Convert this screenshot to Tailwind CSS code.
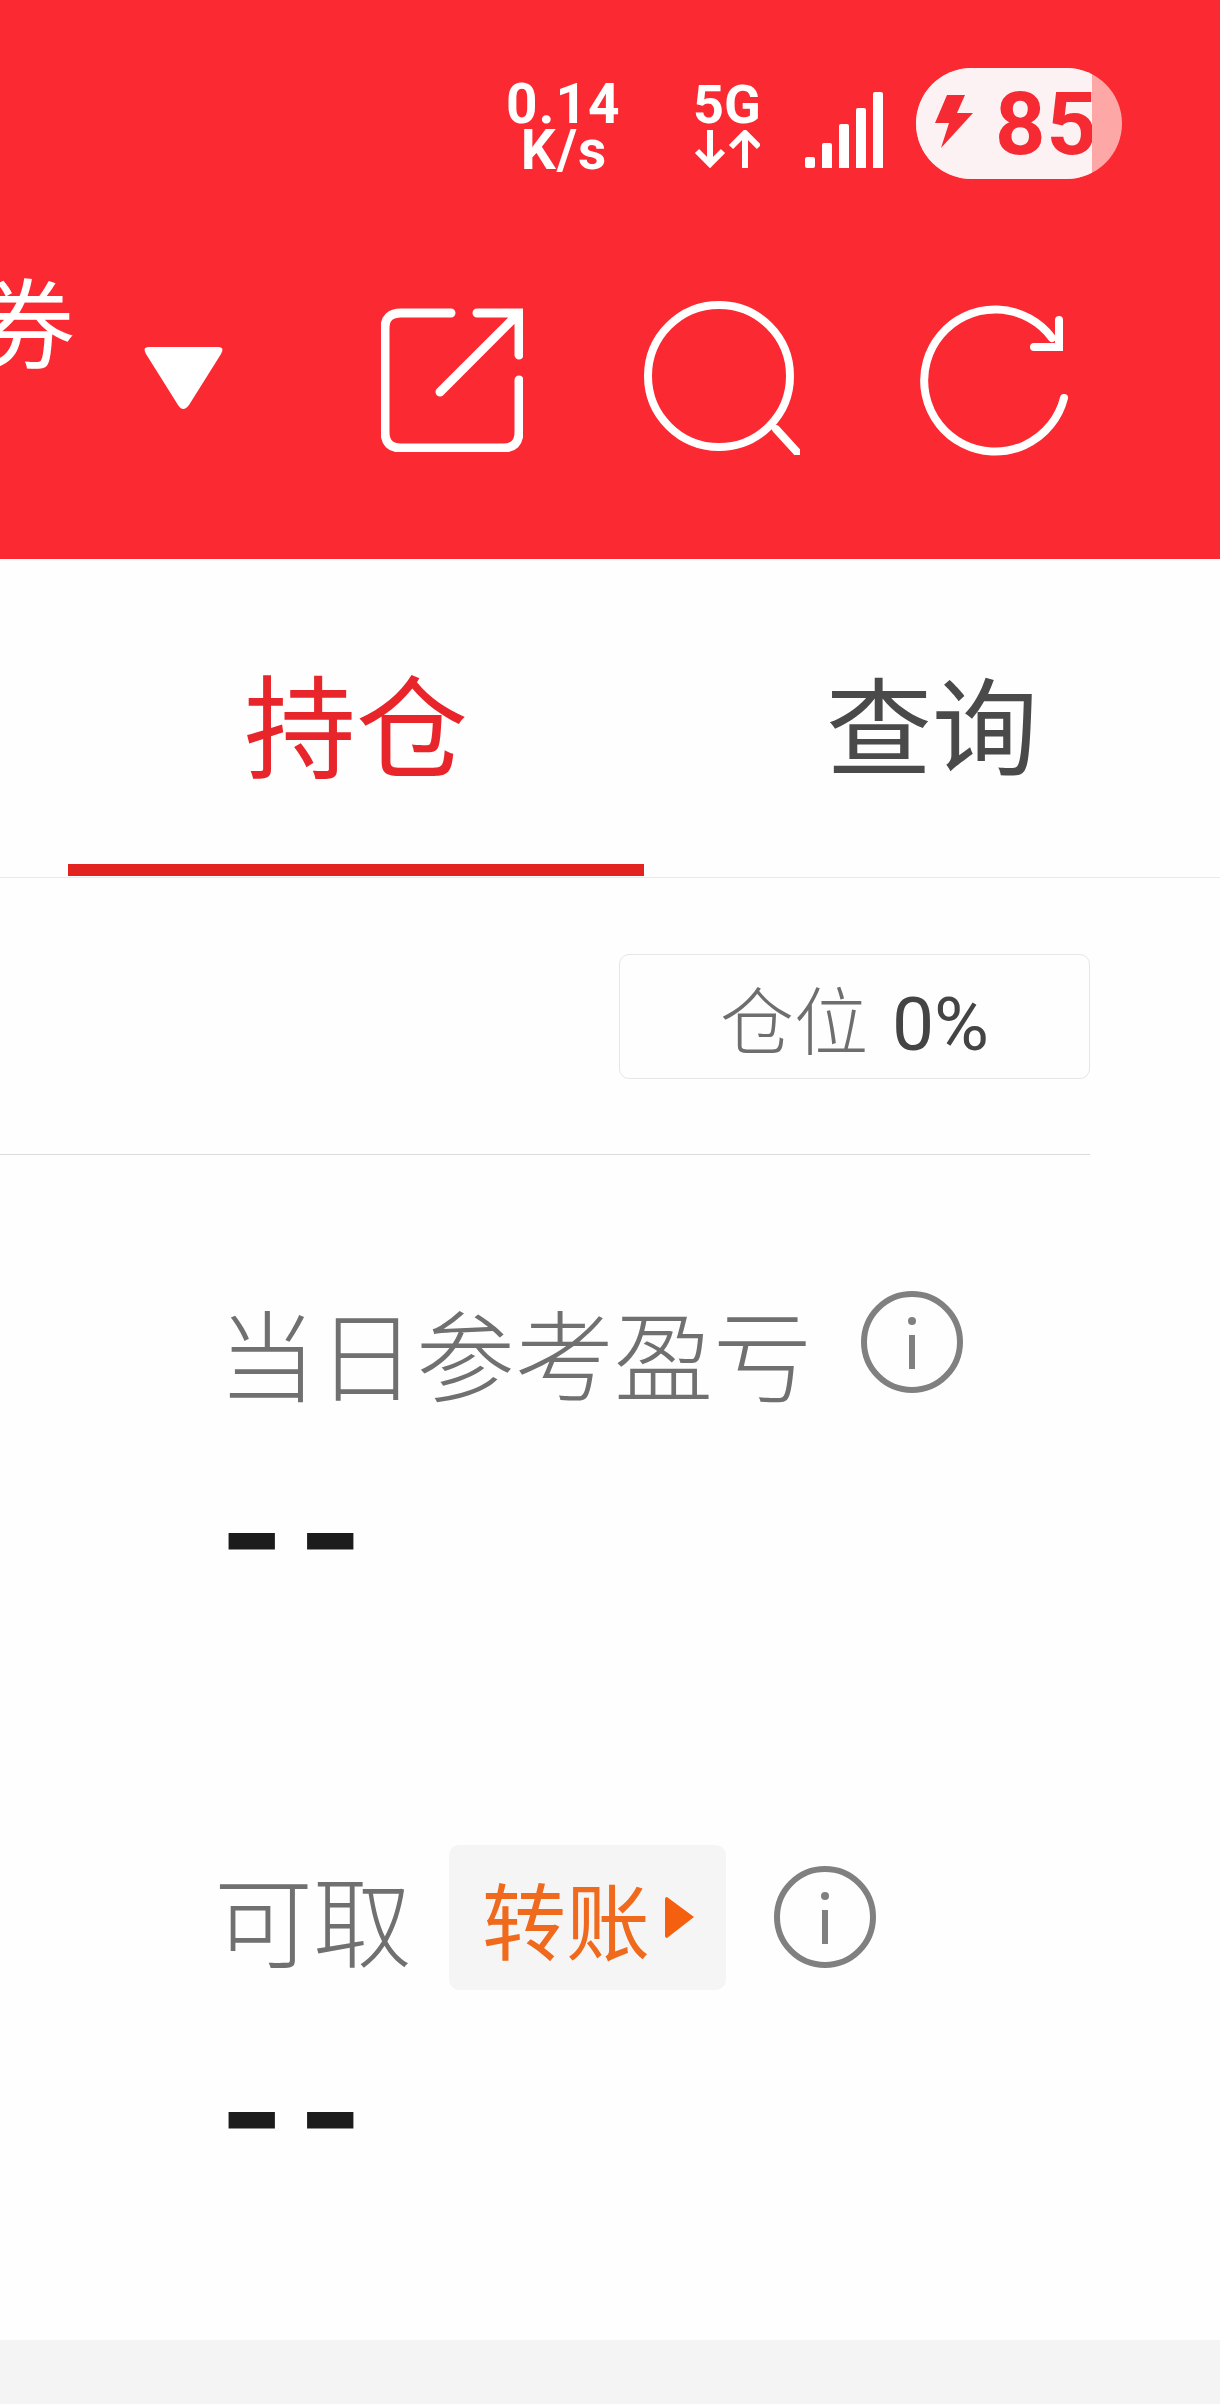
<!doctype html>
<html lang="zh-CN">
<head>
<meta charset="utf-8" />
<title>持仓</title>
<script src="https://cdn.jsdelivr.net/npm/@tailwindcss/browser@4"></script>
</head>
<body class="relative w-[1220px] h-[2404px] overflow-hidden bg-[#fefefe] font-['Noto_Sans_CJK_SC',sans-serif]">
  <header class="h-[559px] bg-[#fb2931] overflow-hidden text-white">
    <!-- status bar -->
    <div class="flex items-center justify-end pt-[68px] pr-[98px] font-['Roboto',sans-serif] font-bold">
      <div class="w-[110px] mt-[6px] text-center text-[55px] leading-[46px] tracking-[1px]">
        <p>0.14</p>
        <p class="pl-[6px]">K/s</p>
      </div>
      <div class="w-[66px] ml-[78px] flex flex-col items-center">
        <p class="text-[54px] leading-[50px]">5G</p>
        <svg class="w-[66px] h-[38px]" viewBox="0 0 66 38" fill="none" stroke="white" stroke-width="6">
          <path d="M16 0V34M3 21L16 34L29 21" />
          <path d="M51 38V4M37 17L51 3L65 17" />
        </svg>
      </div>
      <div class="flex items-end gap-[7px] ml-[45px] h-[76px] self-end mb-[11px]">
        <div class="w-[10px] h-[11px] bg-white rounded-[2px]"></div>
        <div class="w-[10px] h-[25px] bg-white rounded-t-[2px]"></div>
        <div class="w-[10px] h-[44px] bg-white rounded-t-[2px]"></div>
        <div class="w-[10px] h-[60px] bg-white rounded-t-[2px]"></div>
        <div class="w-[10px] h-[76px] bg-white rounded-t-[2px]"></div>
      </div>
      <div class="w-[206px] h-[111px] ml-[33px] rounded-full overflow-hidden bg-[#fda7a7]">
        <div class="w-[176px] h-full overflow-hidden bg-[#fdf2f3] flex items-center pl-[19px] text-[#f52a32]">
          <svg class="w-[38px] h-[53px] -mt-[4px] shrink-0" viewBox="0 0 38 53" fill="#f52a32">
            <path d="M12 0H30L22 18H38L6 53L14 28H0Z" />
          </svg>
          <span class="ml-[22px] text-[88px] leading-none tracking-[1px]">85</span>
        </div>
      </div>
    </div>
    <!-- toolbar -->
    <div class="flex items-start mt-[122px]">
      <span class="-ml-[23px] -mt-[41px] text-[98px] leading-[1.2]">券</span>
      <svg class="w-[81px] h-[63px] ml-[68px] mt-[46px]" viewBox="0 0 81 63" fill="white">
        <path d="M6 0H75Q82 0 78 7L46 58Q40 66 35 58L3 7Q-1 0 6 0Z" />
      </svg>
      <svg class="w-[142px] h-[144px] ml-[157px] mt-[7px]" viewBox="0 0 142 144" fill="none" stroke="white" stroke-width="9" stroke-linecap="round">
        <path d="M70 5H20Q4 5 4 20V124Q4 140 20 140H122Q138 140 138 124V72" />
        <path d="M96 5H138V47M138 5L59 84" />
      </svg>
      <svg class="w-[156px] h-[154px] ml-[121px]" viewBox="0 0 156 154" fill="none" stroke="white" stroke-width="8" stroke-linecap="round">
        <circle cx="75" cy="75" r="71" />
        <path d="M132 128L153 151" />
      </svg>
      <svg class="w-[146px] h-[151px] ml-[122px] mt-[3px] overflow-visible" viewBox="0 0 146 151" fill="none" stroke="white" stroke-width="8" stroke-linecap="round">
        <path d="M142 94A71 71 0 1 1 130 34" />
        <path d="M137 16V43H112" />
      </svg>
    </div>
  </header>

  <!-- tabs -->
  <nav class="flex h-[319px] pl-[68px] border-b border-[#ebe9e9]">
    <div class="w-[576px] h-[317px] border-b-[12px] border-[#e3231f] pt-[95px] text-[112px] leading-[1.2] text-center text-[#e8252a]">持仓</div>
    <div class="w-[576px] pt-[99px] text-[106px] leading-[1.2] text-center text-[#4a4a4a]">查询</div>
  </nav>

  <!-- position -->
  <div class="w-[1090px] h-[277px] pt-[76px] flex justify-end border-b border-[#dcdad8]">
    <div class="w-[471px] h-[125px] flex items-center justify-center gap-[24px] border border-[#e7e6e6] rounded-[10px] leading-none">
      <span class="text-[74px] font-light text-[#6e6e6e]">仓位</span>
      <span class="mt-[16px] text-[75px] font-['Roboto',sans-serif] text-[#444]">0%</span>
    </div>
  </div>

  <main>
    <section class="pl-[218px] pt-[143px]">
      <div class="flex items-center h-[106px]">
        <span class="text-[99px] leading-none font-light text-[#707070]">当日参考盈亏</span>
        <svg class="w-[102px] h-[102px] ml-[49px] -mt-[18px] shrink-0" viewBox="0 0 102 102" fill="none" stroke="#808080" stroke-width="6">
          <circle cx="51" cy="51" r="48" />
          <circle cx="51" cy="30" r="4" fill="#808080" stroke="none" />
          <path d="M51 44V78" />
        </svg>
      </div>
      <p class="mt-[73px] ml-[1px] text-[140px] leading-[110px] font-bold tracking-[13px] text-[#1c1c1c] font-['Inter',sans-serif]">--</p>
    </section>

    <section class="pl-[214px] pt-[258px]">
      <div class="flex items-center h-[145px]">
        <span class="text-[99px] leading-none font-light text-[#707070]">可取</span>
        <button class="w-[277px] h-[145px] ml-[37px] pl-[33px] flex items-center bg-[#f6f5f5] rounded-[10px] text-[#ef6a1c] text-[84px] leading-none">
          <span>转账</span>
          <svg class="w-[31px] h-[41px] ml-[14px] shrink-0" viewBox="0 0 29 41" fill="#f4600f">
            <path d="M2 0L29 20L2 41Q0 41 0 39V2Q0 0 2 0Z" />
          </svg>
        </button>
        <svg class="w-[102px] h-[102px] ml-[48px] -mt-[2px] shrink-0" viewBox="0 0 102 102" fill="none" stroke="#808080" stroke-width="6">
          <circle cx="51" cy="51" r="48" />
          <circle cx="51" cy="30" r="4" fill="#808080" stroke="none" />
          <path d="M51 44V78" />
        </svg>
      </div>
      <p class="mt-[66px] ml-[5px] text-[140px] leading-[110px] font-bold tracking-[13px] text-[#1c1c1c] font-['Inter',sans-serif]">--</p>
    </section>
  </main>

  <footer class="absolute left-0 top-[2340px] w-[1220px] h-[64px] bg-[#f5f4f4]"></footer>
</body>
</html>
